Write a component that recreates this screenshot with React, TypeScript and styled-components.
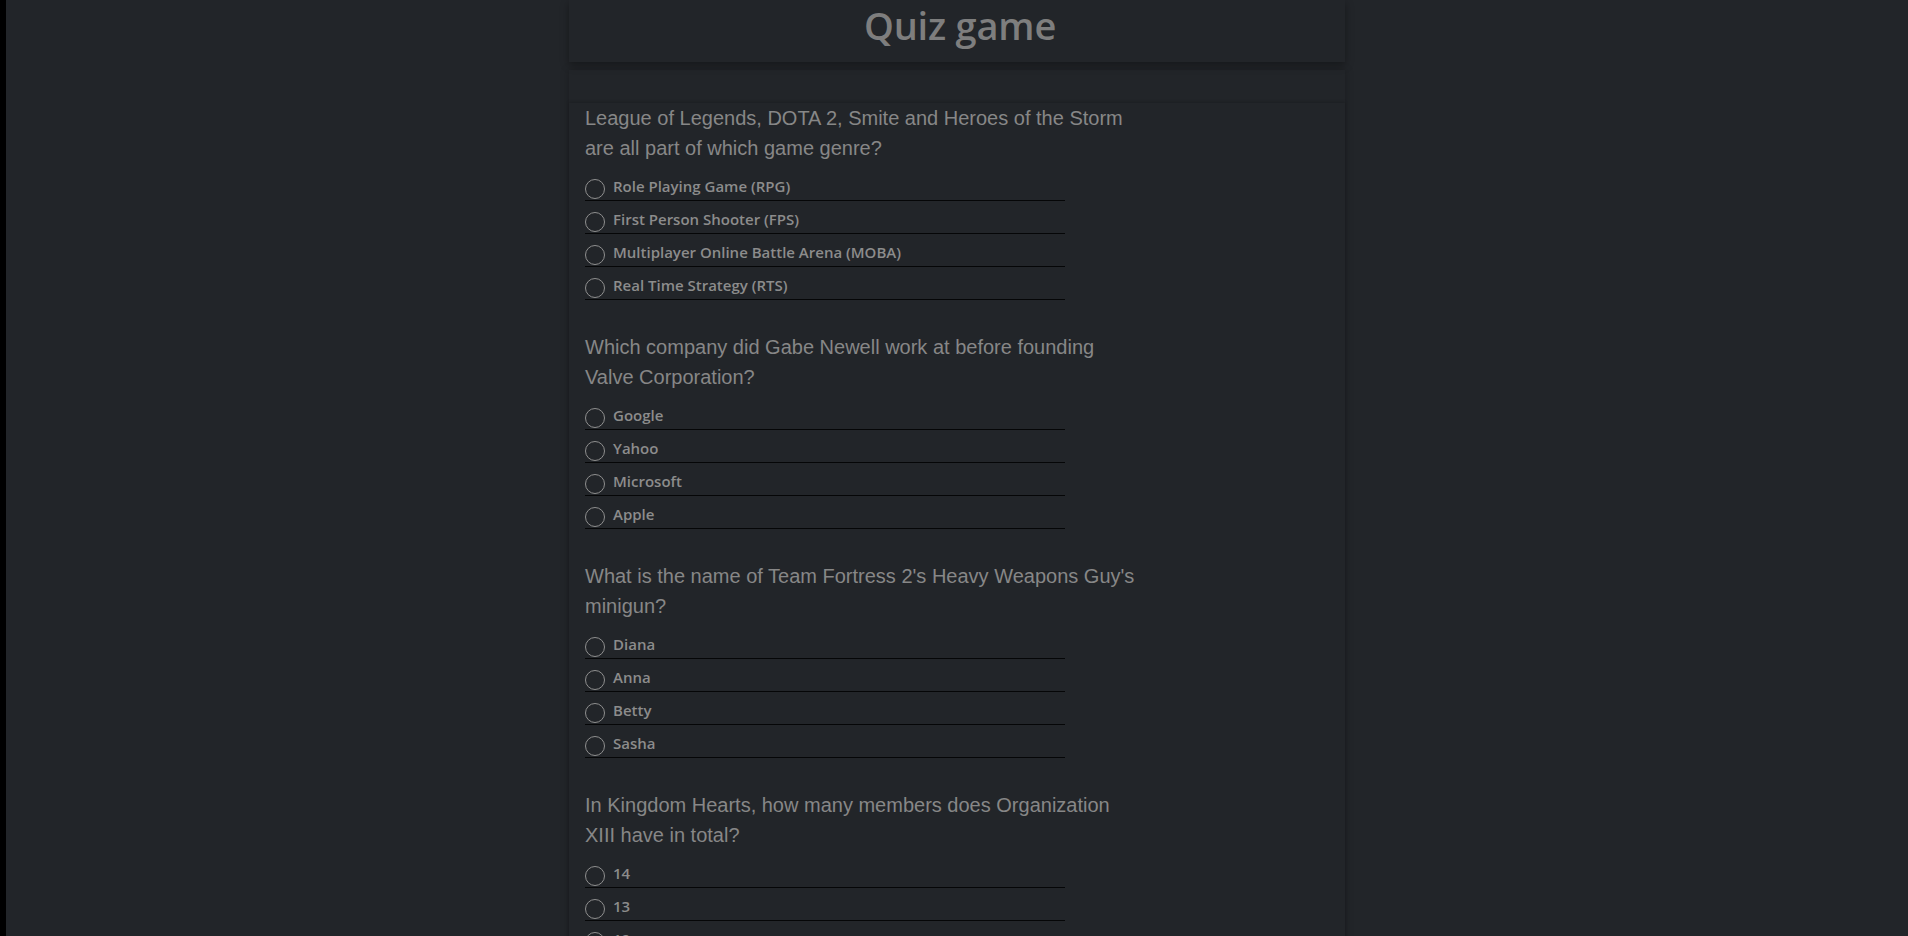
import styled, { createGlobalStyle } from "styled-components";

const GlobalStyle = createGlobalStyle`
  html, body {
    margin: 0;
    padding: 0;
    background: #000;
  }
  * {
    box-sizing: border-box;
  }
`;

const Page = styled.div`
  margin-left: 6px;
  min-height: 100vh;
  background: #222529;
  overflow: hidden;
`;

const Header = styled.header`
  width: 776px;
  height: 62px;
  margin: 0 auto;
  background: #222529;
  box-shadow: 0 3px 8px rgba(0, 0, 0, 0.35);
  display: flex;
  justify-content: center;
  position: relative;
  z-index: 1;
`;

const Title = styled.h1`
  margin: 0 0 0 6px;
  font-family: "Open Sans", "Noto Sans", sans-serif;
  font-weight: 600;
  font-size: 38px;
  line-height: 50px;
  letter-spacing: -0.2px;
  color: #7e7e7e;
`;

const Quiz = styled.main`
  width: 776px;
  margin: 8px auto 0;
  padding-top: 33px;
  box-shadow: 0 0 8px rgba(0, 0, 0, 0.25);
`;

const QuestionList = styled.div`
  padding: 0 16px;
  box-shadow: 0 -1px 3px rgba(0, 0, 0, 0.2);
`;

const QuestionBlock = styled.section`
  padding-bottom: 32px;
`;

const QuestionText = styled.p`
  width: 556px;
  margin: 0 0 5px;
  font-family: "Liberation Sans", Arial, sans-serif;
  font-size: 20px;
  line-height: 30px;
  color: #878787;
`;

const Options = styled.div`
  width: 480px;
  display: flex;
  flex-direction: column;
`;

const OptionRow = styled.label`
  display: flex;
  align-items: flex-end;
  height: 33px;
  padding-bottom: 1px;
  border-bottom: 1px solid #050607;
  cursor: pointer;
`;

const Radio = styled.input.attrs({ type: "radio" })`
  appearance: none;
  width: 20px;
  height: 20px;
  margin: 0 8px 0 0;
  border: 1px solid #8f8f8f;
  border-radius: 50%;
  background: transparent;
  flex-shrink: 0;
  &:checked {
    background: radial-gradient(circle, #8f8f8f 0 5px, transparent 6px);
  }
`;

const OptionText = styled.span`
  font-family: "Open Sans", "Noto Sans", sans-serif;
  font-weight: 600;
  font-size: 15px;
  line-height: 20px;
  margin-bottom: 3px;
  color: #8c8c8c;
`;

const questions = [
  {
    text: "League of Legends, DOTA 2, Smite and Heroes of the Storm are all part of which game genre?",
    answers: [
      "Role Playing Game (RPG)",
      "First Person Shooter (FPS)",
      "Multiplayer Online Battle Arena (MOBA)",
      "Real Time Strategy (RTS)",
    ],
  },
  {
    text: "Which company did Gabe Newell work at before founding Valve Corporation?",
    answers: ["Google", "Yahoo", "Microsoft", "Apple"],
  },
  {
    text: "What is the name of Team Fortress 2's Heavy Weapons Guy's minigun?",
    answers: ["Diana", "Anna", "Betty", "Sasha"],
  },
  {
    text: "In Kingdom Hearts, how many members does Organization XIII have in total?",
    answers: ["14", "13", "12", "15"],
  },
];

function App() {
  return (
    <>
      <GlobalStyle />
      <Page>
        <Header>
          <Title>Quiz game</Title>
        </Header>
        <Quiz>
          <QuestionList>
            {questions.map((q, i) => (
              <QuestionBlock key={i}>
                <QuestionText>{q.text}</QuestionText>
                <Options>
                  {q.answers.map((a) => (
                    <OptionRow key={a}>
                      <Radio name={`question-${i}`} value={a} />
                      <OptionText>{a}</OptionText>
                    </OptionRow>
                  ))}
                </Options>
              </QuestionBlock>
            ))}
          </QuestionList>
        </Quiz>
      </Page>
    </>
  );
}

export default App;
